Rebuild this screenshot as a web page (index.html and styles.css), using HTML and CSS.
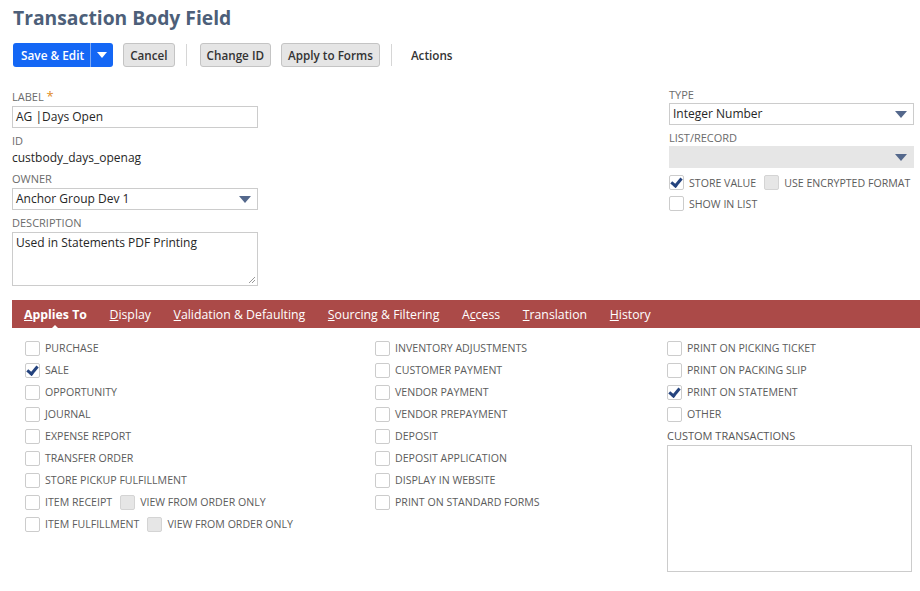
FILE: index.html
```html
<html>
<head><title>Transaction Body Field</title>
<link rel="stylesheet" href="styles.css">
</head>
<body>

<div class="page">
<h1 class="title">Transaction Body Field</h1>

<div class="toolbar">
  <div class="split">
    <span class="primary">Save &amp; Edit</span>
    <span class="primary caret"><svg width="10" height="6" viewBox="0 0 10 6"><path d="M0 0h10L5 6z" fill="#fff"/></svg></span>
  </div>
  <span class="btn">Cancel</span>
  <span class="sep"></span>
  <span class="btn">Change ID</span>
  <span class="btn">Apply to Forms</span>
  <span class="sep"></span>
  <span class="actions">Actions</span>
</div>

<div class="main">
  <div class="col">
    <div class="lbl">LABEL <span class="req">*</span></div>
    <div class="input">AG |Days Open</div>
    <div class="lbl">ID</div>
    <div class="value">custbody_days_openag</div>
    <div class="lbl">OWNER</div>
    <div class="input sel">Anchor Group Dev 1<svg width="12" height="7" viewBox="0 0 12 7"><path d="M0 0h12L6 7z" fill="#54688c"/></svg></div>
    <div class="lbl">DESCRIPTION</div>
    <div class="input area">Used in Statements PDF Printing
      <svg class="grip" width="8" height="8" viewBox="0 0 8 8"><path d="M7 1L1 7M7 4L4 7" stroke="#999" stroke-width="1"/></svg>
    </div>
  </div>
  <div class="col right">
    <div class="lbl">TYPE</div>
    <div class="input sel">Integer Number<svg width="12" height="7" viewBox="0 0 12 7"><path d="M0 0h12L6 7z" fill="#54688c"/></svg></div>
    <div class="lbl">LIST/RECORD</div>
    <div class="input sel off"><svg width="12" height="7" viewBox="0 0 12 7"><path d="M0 0h12L6 7z" fill="#54688c"/></svg></div>
    <div class="cbrow">
      <span class="cb on"></span><span class="cbt">STORE VALUE</span>
      <span class="cb dis"></span><span class="cbt">USE ENCRYPTED FORMAT</span>
    </div>
    <div class="cbrow">
      <span class="cb"></span><span class="cbt">SHOW IN LIST</span>
    </div>
  </div>
</div>

<div class="tabs">
  <span class="tab cur"><u>A</u>pplies To</span>
  <span class="tab"><u>D</u>isplay</span>
  <span class="tab"><u>V</u>alidation &amp; Defaulting</span>
  <span class="tab"><u>S</u>ourcing &amp; Filtering</span>
  <span class="tab">A<u>c</u>cess</span>
  <span class="tab"><u>T</u>ranslation</span>
  <span class="tab"><u>H</u>istory</span>
</div>

<div class="grid">
  <div class="list">
    <div class="cbrow"><span class="cb"></span><span class="cbt">PURCHASE</span></div>
    <div class="cbrow"><span class="cb on"></span><span class="cbt">SALE</span></div>
    <div class="cbrow"><span class="cb"></span><span class="cbt">OPPORTUNITY</span></div>
    <div class="cbrow"><span class="cb"></span><span class="cbt">JOURNAL</span></div>
    <div class="cbrow"><span class="cb"></span><span class="cbt">EXPENSE REPORT</span></div>
    <div class="cbrow"><span class="cb"></span><span class="cbt">TRANSFER ORDER</span></div>
    <div class="cbrow"><span class="cb"></span><span class="cbt">STORE PICKUP FULFILLMENT</span></div>
    <div class="cbrow"><span class="cb"></span><span class="cbt">ITEM RECEIPT</span><span class="cb dis"></span><span class="cbt">VIEW FROM ORDER ONLY</span></div>
    <div class="cbrow"><span class="cb"></span><span class="cbt">ITEM FULFILLMENT</span><span class="cb dis"></span><span class="cbt">VIEW FROM ORDER ONLY</span></div>
  </div>
  <div class="list">
    <div class="cbrow"><span class="cb"></span><span class="cbt">INVENTORY ADJUSTMENTS</span></div>
    <div class="cbrow"><span class="cb"></span><span class="cbt">CUSTOMER PAYMENT</span></div>
    <div class="cbrow"><span class="cb"></span><span class="cbt">VENDOR PAYMENT</span></div>
    <div class="cbrow"><span class="cb"></span><span class="cbt">VENDOR PREPAYMENT</span></div>
    <div class="cbrow"><span class="cb"></span><span class="cbt">DEPOSIT</span></div>
    <div class="cbrow"><span class="cb"></span><span class="cbt">DEPOSIT APPLICATION</span></div>
    <div class="cbrow"><span class="cb"></span><span class="cbt">DISPLAY IN WEBSITE</span></div>
    <div class="cbrow"><span class="cb"></span><span class="cbt">PRINT ON STANDARD FORMS</span></div>
  </div>
  <div class="list">
    <div class="cbrow"><span class="cb"></span><span class="cbt">PRINT ON PICKING TICKET</span></div>
    <div class="cbrow"><span class="cb"></span><span class="cbt">PRINT ON PACKING SLIP</span></div>
    <div class="cbrow"><span class="cb on"></span><span class="cbt">PRINT ON STATEMENT</span></div>
    <div class="cbrow"><span class="cb"></span><span class="cbt">OTHER</span></div>
    <div class="lbl ct">CUSTOM TRANSACTIONS</div>
    <div class="box"></div>
  </div>
</div>
</div>

</body>
</html>
```

FILE: styles.css
```css
body {margin:0; font-family:"Open Sans", Arial, sans-serif; color:#262626; background:#fff;}
.page {padding:0 0 0 12px;}
.title {margin:0; padding:4px 0 0 1px; font-size:19.3px; line-height:28px; font-weight:700; color:#4d5f79;}

.toolbar {display:flex; align-items:center; margin-top:10px; height:25px; padding-left:1px;}
.split {display:flex; margin-right:10px;}
.primary {background:#1467f5; color:#fff; font-size:11.8px; font-weight:600; height:24px; line-height:24px; padding:0 6px 0 8px; border-radius:3px 0 0 3px; white-space:nowrap;}
.primary.caret {border-left:1px solid #7fa8f0; border-radius:0 3px 3px 0; padding:0 6px; display:flex; align-items:center;}
.btn {background:#e5e5e5; border:1px solid #c4c4c4; border-radius:3px; color:#333; font-size:11.7px; font-weight:600; height:22px; line-height:22px; padding:0 6px; margin-right:10px; white-space:nowrap;}
.sep {width:1px; height:22px; background:#d6d6d6; margin:0 13px 0 1px;}
.actions {font-size:11.7px; font-weight:600; color:#333; margin-left:6px;}

.main {display:flex; justify-content:space-between; margin-top:22px; padding-right:6px;}
.col {width:246px;}
.col.right {width:245px; margin-top:-2px;}
.lbl {font-size:11px; color:#6b6b6b; line-height:14px; margin-bottom:2px; white-space:nowrap;}
.right .lbl {margin-top:1px; margin-bottom:1px;}
.req {color:#e08a1e; font-size:13px;}
.input {border:1px solid #ccc; height:20px; line-height:20px; font-size:12px; padding:0 3px; margin-bottom:6px; position:relative; color:#262626;}
.sel {display:flex; justify-content:space-between; align-items:center; padding-right:6px;}
.sel.off {background:#e6e6e6; border-color:#e6e6e6; justify-content:flex-end; margin-bottom:4px;}
.area {height:52px; line-height:20px;}
.grip {position:absolute; right:1px; bottom:1px;}
.value {font-size:12px; line-height:16px; margin-bottom:6px;}

.cbrow {display:flex; align-items:center; height:22px; white-space:nowrap;}
.right .cbrow {height:21px;}
.cb {width:13px; height:13px; border:1px solid #ccc; border-radius:2px; background:#fff; margin-right:5px; position:relative; flex:none;}
.cb.dis {background:#e6e6e6; border-color:#d4d4d4;}
.cb.on::after {content:""; position:absolute; left:3px; top:0px; width:4px; height:8px; border:solid #24437e; border-width:0 3px 3px 0; transform:rotate(40deg);}
.cbt {font-size:10.6px; color:#5c5c5c; margin-right:8px;}

.tabs {display:flex; background:#ab4a48; height:28px; align-items:center; margin-top:8px; padding-left:12px; position:relative;}
.tab {color:#fff; font-size:12.3px; margin-right:22.6px; position:relative;}
.tab.cur {font-weight:700;}
.tab.cur::after {content:""; position:absolute; left:50%; margin-left:-5px; bottom:-7px; border:5px solid transparent; border-bottom-color:#fff; border-top:0;}

.grid {display:grid; grid-template-columns:350px 292px 1fr; padding:9px 0 0 13px;}
.ct {margin-top:4px; color:#555;}
.box {border:1px solid #ccc; height:125px; margin-right:8px;}
```
